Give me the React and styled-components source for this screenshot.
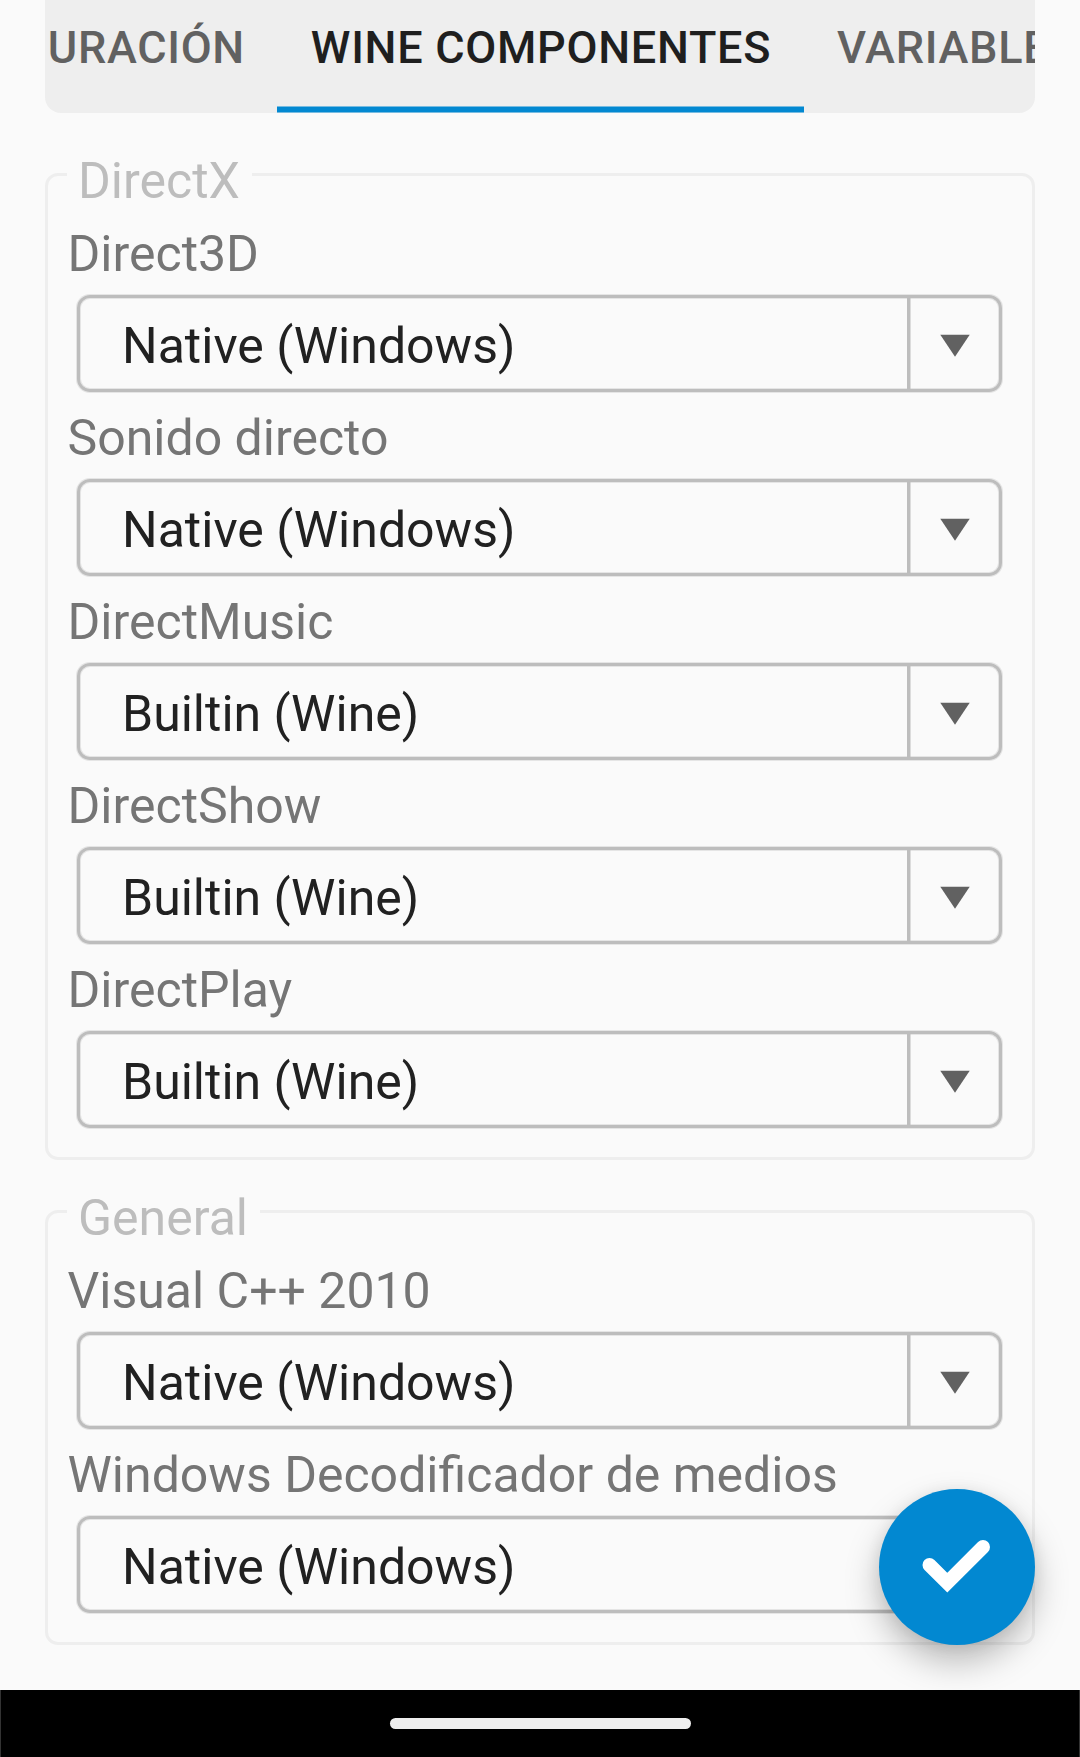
import React from "react";
import styled, { createGlobalStyle } from "styled-components";

const GlobalStyle = createGlobalStyle`
  *, *::before, *::after { box-sizing: border-box; }
  body {
    margin: 0;
    background: #fafafa;
    font-family: Roboto, "Liberation Sans", sans-serif;
  }
`;

const Screen = styled.div`
  position: relative;
  display: flex;
  flex-direction: column;
  width: 1080px;
  height: 1757px;
  overflow: hidden;
  background: #fafafa;
`;

const Content = styled.main`
  flex: 1;
  min-height: 0;
  padding: 0 45px;
`;

const TabBar = styled.nav`
  display: flex;
  height: 113px;
  overflow: hidden;
  background: #eeeeee;
  border-radius: 0 0 16px 16px;
`;

const Tab = styled.div`
  flex: none;
  display: flex;
  justify-content: ${(p) => p.$align || "center"};
  width: ${(p) => p.$width}px;
  height: 113px;
  padding: 21px 32px 0 33px;
  background: ${(p) =>
    p.$active
      ? "linear-gradient(#77bbe0 0 1px, #0288d1 1px 6px, #77bbe0 6px 7px) bottom / 100% 7px no-repeat"
      : "none"};
  color: ${(p) => (p.$active ? "#1f1f1f" : "#616161")};
  font-size: 45px;
  line-height: 54px;
  font-weight: 500;
  letter-spacing: 0.7px;
  white-space: nowrap;
`;

const Group = styled.section`
  position: relative;
  height: ${(p) => p.$height}px;
  margin-top: ${(p) => p.$gap}px;
  padding: 48px 30px 0 20px;
  border: 3px solid #eeeeee;
  border-radius: 13px;
`;

const Legend = styled.h2`
  position: absolute;
  top: -24px;
  left: 19px;
  margin: 0;
  padding: 0 12px 0 11px;
  background: #fafafa;
  color: #bdbdbd;
  font-size: 50px;
  line-height: 58px;
  font-weight: 400;
`;

const Field = styled.div`
  display: flex;
  flex-direction: column;
  height: 184px;
`;

const Label = styled.div`
  height: 71px;
  margin-left: -0.5px;
  color: #757575;
  font-size: 50px;
  line-height: 61px;
  white-space: nowrap;
`;

const Select = styled.div`
  display: flex;
  height: 97px;
  margin-left: 9px;
  border: 3px solid #bdbdbd;
  border-radius: 13px;
  box-shadow: 0 0 0 1px rgba(189, 189, 189, 0.35),
    inset 0 0 0 1px rgba(189, 189, 189, 0.35);
`;

const Value = styled.div`
  flex: 1;
  padding-left: 42px;
  color: #212121;
  font-size: 50px;
  line-height: 96px;
  white-space: nowrap;
`;

const ArrowCell = styled.div`
  display: flex;
  align-items: center;
  justify-content: center;
  width: 92px;
  padding-top: 4px;
  border-left: 3px solid #bdbdbd;
  box-shadow: inset 1px 0 0 rgba(189, 189, 189, 0.5);
`;

const Fab = styled.button`
  position: absolute;
  left: 879px;
  top: 1489px;
  display: flex;
  align-items: center;
  justify-content: center;
  width: 156px;
  height: 156px;
  padding: 0;
  border: 0;
  border-radius: 50%;
  background: #0288d1;
  box-shadow: 0 17px 34px rgba(0, 0, 0, 0.26), 0 2px 16px rgba(0, 0, 0, 0.07);
`;

const SystemBar = styled.footer`
  display: flex;
  justify-content: center;
  height: 67px;
  padding-top: 28px;
  background: #000000;
  border: solid #333333;
  border-width: 0 1px;
`;

const HomePill = styled.div`
  width: 301px;
  height: 11px;
  border-radius: 6px;
  background: #eeeeee;
`;

const groups = [
  {
    title: "DirectX",
    gap: 60,
    height: 987,
    fields: [
      ["Direct3D", "Native (Windows)"],
      ["Sonido directo", "Native (Windows)"],
      ["DirectMusic", "Builtin (Wine)"],
      ["DirectShow", "Builtin (Wine)"],
      ["DirectPlay", "Builtin (Wine)"],
    ],
  },
  {
    title: "General",
    gap: 50,
    height: 435,
    fields: [
      ["Visual C++ 2010", "Native (Windows)"],
      ["Windows Decodificador de medios", "Native (Windows)"],
    ],
  },
];

function Spinner({ value }) {
  return (
    <Select>
      <Value>{value}</Value>
      <ArrowCell>
        <svg width="30" height="23" viewBox="0 0 30 23">
          <path d="M0.3 0.7H29.7L15 22.7Z" fill="#616161" />
        </svg>
      </ArrowCell>
    </Select>
  );
}

export default function App() {
  return (
    <>
      <GlobalStyle />
      <Screen>
        <Content>
          <TabBar>
            <Tab $width={232} $align="flex-end">URACIÓN</Tab>
            <Tab $width={527} $active>WINE COMPONENTES</Tab>
            <Tab $width={300} $align="flex-start">VARIABLE</Tab>
          </TabBar>
          {groups.map((group) => (
            <Group key={group.title} $gap={group.gap} $height={group.height}>
              <Legend>{group.title}</Legend>
              {group.fields.map(([label, value]) => (
                <Field key={label}>
                  <Label>{label}</Label>
                  <Spinner value={value} />
                </Field>
              ))}
            </Group>
          ))}
        </Content>
        <SystemBar>
          <HomePill />
        </SystemBar>
        <Fab aria-label="OK">
          <svg width="156" height="156" viewBox="0 0 156 156" fill="none">
            <path
              d="M50.5 76L68.3 93.7L104 58"
              stroke="#ffffff"
              strokeWidth="14"
              strokeLinecap="round"
              strokeLinejoin="miter"
            />
          </svg>
        </Fab>
      </Screen>
    </>
  );
}
